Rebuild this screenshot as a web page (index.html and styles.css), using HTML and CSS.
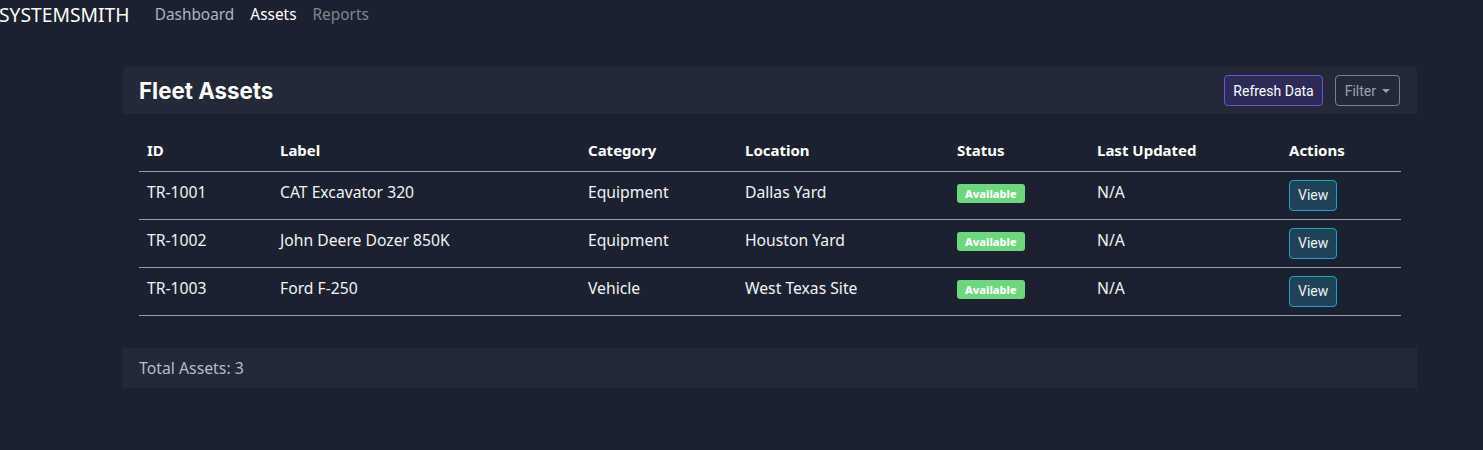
FILE: index.html
```html
<!DOCTYPE html>
<html lang="en">
<head>
<meta charset="utf-8">
<title>Fleet Assets</title>
<link rel="stylesheet" href="styles.css">
</head>
<body>
<nav class="navbar">
  <span class="brand">SYSTEMSMITH</span>
  <a class="nav-link" href="#">Dashboard</a>
  <a class="nav-link active" href="#">Assets</a>
  <a class="nav-link muted" href="#">Reports</a>
</nav>
<main class="main">
  <section class="card">
    <header class="card-header">
      <h1 class="card-title">Fleet Assets</h1>
      <div class="tools">
        <button class="btn btn-primary">Refresh Data</button>
        <button class="btn btn-outline">Filter <span class="caret"></span></button>
      </div>
    </header>
    <div class="card-body">
      <table class="table">
        <colgroup>
          <col class="c-id"><col class="c-label"><col class="c-cat"><col class="c-loc"><col class="c-status"><col class="c-upd"><col class="c-act">
        </colgroup>
        <thead>
          <tr><th>ID</th><th>Label</th><th>Category</th><th>Location</th><th>Status</th><th>Last Updated</th><th>Actions</th></tr>
        </thead>
        <tbody>
          <tr><td>TR-1001</td><td>CAT Excavator 320</td><td>Equipment</td><td>Dallas Yard</td><td><span class="badge">Available</span></td><td>N/A</td><td class="act"><button class="btn btn-view">View</button></td></tr>
          <tr><td>TR-1002</td><td>John Deere Dozer 850K</td><td>Equipment</td><td>Houston Yard</td><td><span class="badge">Available</span></td><td>N/A</td><td class="act"><button class="btn btn-view">View</button></td></tr>
          <tr><td>TR-1003</td><td>Ford F-250</td><td>Vehicle</td><td>West Texas Site</td><td><span class="badge">Available</span></td><td>N/A</td><td class="act"><button class="btn btn-view">View</button></td></tr>
        </tbody>
      </table>
    </div>
    <footer class="card-footer">Total Assets: 3</footer>
  </section>
</main>
</body>
</html>
```
FILE: styles.css
```css
* { box-sizing: border-box; }
html, body { margin: 0; padding: 0; }
body {
  background: #1c2130;
  color: #f1f3f6;
  font-family: "Noto Sans", "Open Sans", sans-serif;
  font-size: 15px;
  height: 450px;
  overflow: hidden;
}
.navbar {
  display: flex;
  align-items: center;
  height: 28px;
  padding: 0;
}
.brand {
  font-family: "Noto Sans", sans-serif;
  font-size: 19.3px;
  color: #ffffff;
  margin-right: 25px;
  margin-left: -1px;
}
.nav-link {
  color: #aeb4bf;
  text-decoration: none;
  font-size: 15.4px;
  margin-right: 16px;
}
.nav-link.active { color: #ffffff; }
.nav-link.muted { color: #7f8592; }
.main {
  padding: 39px 66px 0 123px;
}
.card {
  width: 1294px;
}
.card-header {
  display: flex;
  align-items: center;
  justify-content: space-between;
  height: 47px;
  background: #232937;
  border-radius: 4px 4px 0 0;
  padding: 0 17px 0 16px;
}
.card-title {
  margin: 0;
  font-family: Inter, sans-serif;
  font-size: 22.3px;
  font-weight: 700;
  color: #ffffff;
}
.tools { display: flex; gap: 12px; }
.btn {
  font-family: Roboto, sans-serif;
  font-size: 14px;
  height: 31px;
  border-radius: 4px;
  padding: 0 8px;
  cursor: pointer;
  display: inline-flex;
  align-items: center;
}
.btn-primary {
  background: #2c2b58;
  border: 1px solid #6b55d3;
  color: #ffffff;
}
.btn-outline {
  background: transparent;
  border: 1px solid #7a808c;
  color: #9aa0ab;
  padding: 0 9px;
}
.caret {
  display: inline-block;
  margin-left: 6px;
  border-left: 4px solid transparent;
  border-right: 4px solid transparent;
  border-top: 4px solid #9aa0ab;
}
.card-body {
  padding: 16px 16px 32px;
}
.table {
  width: 1262px;
  border-collapse: collapse;
  table-layout: fixed;
}
.c-id { width: 133px; }
.c-label { width: 308px; }
.c-cat { width: 157px; }
.c-loc { width: 212px; }
.c-status { width: 140px; }
.c-upd { width: 192px; }
.c-act { width: 120px; }
th {
  text-align: left;
  font-weight: 700;
  padding: 8px 8px;
  height: 41px;
  border-bottom: 1px solid #9aa0ab;
  color: #ffffff;
}
td {
  padding: 0 8px 6px;
  height: 48px;
  border-bottom: 1px solid #9aa0ab;
  color: #f1f3f6;
  font-size: 15.7px;
  vertical-align: middle;
}
td.act { padding-bottom: 0; }
.badge {
  display: inline-block;
  background: #6ed67e;
  color: #ffffff;
  font-weight: 800;
  font-size: 11px;
  padding: 3px 8px;
  border-radius: 3px;
  line-height: 13px;
  height: 19px;
  vertical-align: middle;
}
.btn-view {
  background: #1f4256;
  border: 1px solid #18a7c9;
  color: #eef3f6;
  padding: 0 8px;
}
.card-footer {
  height: 40px;
  background: #232937;
  padding: 0 16px;
  display: flex;
  align-items: center;
  color: #b6bcc6;
  font-size: 15.8px;
}
```
